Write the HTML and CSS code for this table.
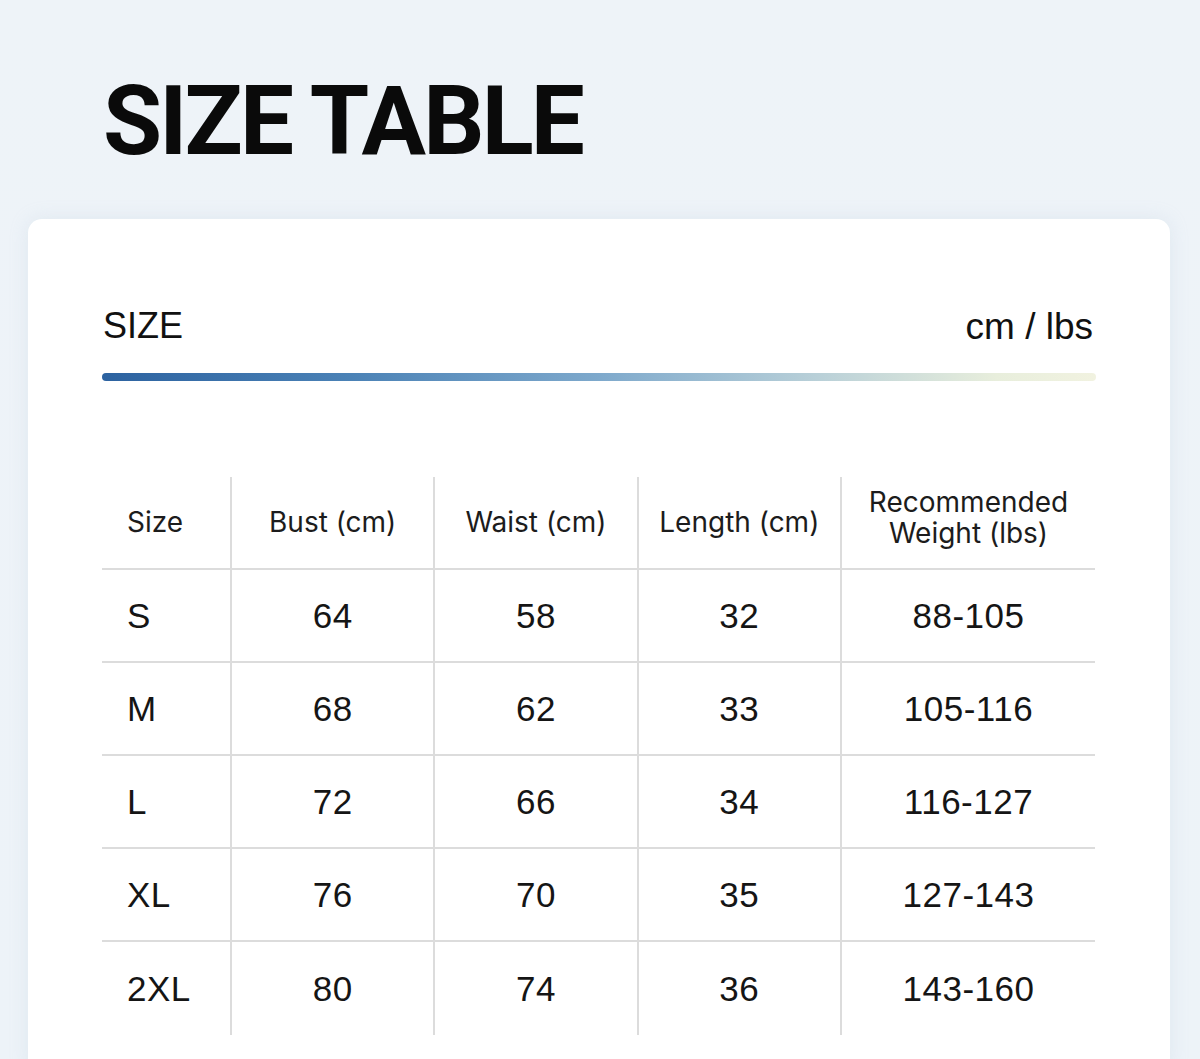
FILE: index.html
```html
<!DOCTYPE html>
<html lang="en">
<head>
<meta charset="utf-8">
<title>Size Table</title>
<link rel="stylesheet" href="styles.css">
</head>
<body>
<div class="page">
  <h1 class="title">SIZE TABLE</h1>
  <section class="card">
    <div class="card-head">
      <span class="label">SIZE</span>
      <span class="units">cm / lbs</span>
    </div>
    <div class="bar"></div>
    <table class="sizes">
      <thead>
        <tr>
          <th class="first">Size</th>
          <th>Bust (cm)</th>
          <th>Waist (cm)</th>
          <th>Length (cm)</th>
          <th class="last"><span class="two-line">Recommended<br>Weight (lbs)</span></th>
        </tr>
      </thead>
      <tbody>
        <tr><td class="first">S</td><td>64</td><td>58</td><td>32</td><td class="last">88-105</td></tr>
        <tr><td class="first">M</td><td>68</td><td>62</td><td>33</td><td class="last">105-116</td></tr>
        <tr><td class="first">L</td><td>72</td><td>66</td><td>34</td><td class="last">116-127</td></tr>
        <tr><td class="first">XL</td><td>76</td><td>70</td><td>35</td><td class="last">127-143</td></tr>
        <tr><td class="first">2XL</td><td>80</td><td>74</td><td>36</td><td class="last">143-160</td></tr>
      </tbody>
    </table>
  </section>
</div>
</body>
</html>
```

FILE: styles.css
```css
html, body {
  margin: 0;
  padding: 0;
}

body {
  background: linear-gradient(180deg, #eef3f8 0%, #edf3f8 100%);
  color: #111;
  font-family: "Liberation Sans", Arial, sans-serif;
  height: 1059px;
  overflow: hidden;
}

.page {
  padding: 73px 30px 0 28px;
}

.title {
  margin: 0 0 50px 75px;
  font-family: Roboto, "Liberation Sans", sans-serif;
  font-weight: 700;
  font-size: 96px;
  line-height: 96px;
  letter-spacing: -2.8px;
  color: #0a0a0a;
}

.card {
  background: #ffffff;
  border-radius: 14px;
  padding: 85px 74px 40px 74px;
  box-shadow: 0 0 18px rgba(180, 200, 220, 0.25);
}

.card-head {
  display: flex;
  justify-content: space-between;
  align-items: baseline;
  font-size: 36px;
  line-height: 43px;
  color: #111;
  padding-left: 1px;
}

.units {
  position: relative;
  top: 1px;
  font-size: 37px;
  margin-right: 3px;
}

.bar {
  margin-top: 26px;
  height: 8px;
  border-radius: 4px;
  background: linear-gradient(90deg, #2c62a0 0%, #4b82b6 25%, #7ea9cc 50%, #b9d0d8 72%, #e8eedc 90%, #f1f2e0 100%);
}

.sizes {
  margin-top: 96px;
  width: 993px;
  border-collapse: collapse;
  table-layout: fixed;
}

.sizes th,
.sizes td {
  border-left: 2px solid #dcdcdc;
  text-align: center;
  padding: 0;
}

.sizes th.first,
.sizes td.first {
  border-left: none;
  text-align: left;
  padding-left: 25px;
  width: 103px;
}

.sizes th {
  font-family: Inter, "Noto Sans", sans-serif;
  font-weight: 400;
  font-size: 28px;
  line-height: 31px;
  color: #1c1c1c;
  height: 91px;
  border-bottom: 2px solid #dcdcdc;
}

.sizes th.last {
  width: 253px;
}

.two-line {
  display: block;
  position: relative;
  top: -5px;
}

.sizes td {
  font-size: 35px;
  letter-spacing: 0.5px;
  color: #151515;
  height: 91px;
}

.sizes tbody tr + tr td {
  border-top: 2px solid #dcdcdc;
}

.sizes tbody tr:last-child td {
  height: 93px;
}
```
